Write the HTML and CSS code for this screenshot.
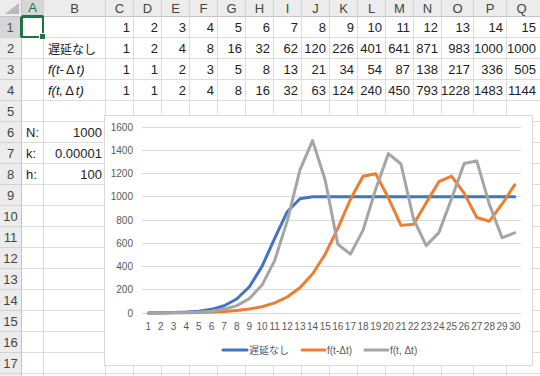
FILE: index.html
```html
<!DOCTYPE html>
<html lang="ja">
<head>
<meta charset="utf-8">
<title>Sheet</title>
<link rel="stylesheet" href="styles.css">
</head>
<body>
<div class="page">
  <div class="sheet">
    <div class="row hdr">
      <div class="corner"></div><div class="ch sel">A</div><div class="ch">B</div><div class="ch">C</div><div class="ch">D</div><div class="ch">E</div><div class="ch">F</div><div class="ch">G</div><div class="ch">H</div><div class="ch">I</div><div class="ch">J</div><div class="ch">K</div><div class="ch">L</div><div class="ch">M</div><div class="ch">N</div><div class="ch">O</div><div class="ch">P</div><div class="ch">Q</div>
    </div>
    <div class="row">
      <div class="rh sel">1</div><div class="cell a1"></div><div class="cell"></div><div class="cell num">1</div><div class="cell num">2</div><div class="cell num">3</div><div class="cell num">4</div><div class="cell num">5</div><div class="cell num">6</div><div class="cell num">7</div><div class="cell num">8</div><div class="cell num">9</div><div class="cell num">10</div><div class="cell num">11</div><div class="cell num">12</div><div class="cell num">13</div><div class="cell num">14</div><div class="cell num">15</div>
    </div>
    <div class="row">
      <div class="rh">2</div><div class="cell"></div><div class="cell txt jp">遅延なし</div><div class="cell num">1</div><div class="cell num">2</div><div class="cell num">4</div><div class="cell num">8</div><div class="cell num">16</div><div class="cell num">32</div><div class="cell num">62</div><div class="cell num">120</div><div class="cell num">226</div><div class="cell num">401</div><div class="cell num">641</div><div class="cell num">871</div><div class="cell num">983</div><div class="cell num">1000</div><div class="cell num">1000</div>
    </div>
    <div class="row">
      <div class="rh">3</div><div class="cell"></div><div class="cell txt it">f(t-<span class="delta">Δ</span>t)</div><div class="cell num">1</div><div class="cell num">1</div><div class="cell num">2</div><div class="cell num">3</div><div class="cell num">5</div><div class="cell num">8</div><div class="cell num">13</div><div class="cell num">21</div><div class="cell num">34</div><div class="cell num">54</div><div class="cell num">87</div><div class="cell num">138</div><div class="cell num">217</div><div class="cell num">336</div><div class="cell num">505</div>
    </div>
    <div class="row">
      <div class="rh">4</div><div class="cell"></div><div class="cell txt it">f(t, <span class="delta">Δ</span>t)</div><div class="cell num">1</div><div class="cell num">1</div><div class="cell num">2</div><div class="cell num">4</div><div class="cell num">8</div><div class="cell num">16</div><div class="cell num">32</div><div class="cell num">63</div><div class="cell num">124</div><div class="cell num">240</div><div class="cell num">450</div><div class="cell num">793</div><div class="cell num">1228</div><div class="cell num">1483</div><div class="cell num">1144</div>
    </div>
    <div class="row">
      <div class="rh">5</div><div class="cell"></div><div class="cell"></div><div class="cell"></div><div class="cell"></div><div class="cell"></div><div class="cell"></div><div class="cell"></div><div class="cell"></div><div class="cell"></div><div class="cell"></div><div class="cell"></div><div class="cell"></div><div class="cell"></div><div class="cell"></div><div class="cell"></div><div class="cell"></div><div class="cell"></div>
    </div>
    <div class="row">
      <div class="rh">6</div><div class="cell txt">N:</div><div class="cell num">1000</div><div class="cell"></div><div class="cell"></div><div class="cell"></div><div class="cell"></div><div class="cell"></div><div class="cell"></div><div class="cell"></div><div class="cell"></div><div class="cell"></div><div class="cell"></div><div class="cell"></div><div class="cell"></div><div class="cell"></div><div class="cell"></div><div class="cell"></div>
    </div>
    <div class="row">
      <div class="rh">7</div><div class="cell txt">k:</div><div class="cell num">0.00001</div><div class="cell"></div><div class="cell"></div><div class="cell"></div><div class="cell"></div><div class="cell"></div><div class="cell"></div><div class="cell"></div><div class="cell"></div><div class="cell"></div><div class="cell"></div><div class="cell"></div><div class="cell"></div><div class="cell"></div><div class="cell"></div><div class="cell"></div>
    </div>
    <div class="row">
      <div class="rh">8</div><div class="cell txt">h:</div><div class="cell num">100</div><div class="cell"></div><div class="cell"></div><div class="cell"></div><div class="cell"></div><div class="cell"></div><div class="cell"></div><div class="cell"></div><div class="cell"></div><div class="cell"></div><div class="cell"></div><div class="cell"></div><div class="cell"></div><div class="cell"></div><div class="cell"></div><div class="cell"></div>
    </div>
    <div class="row">
      <div class="rh">9</div><div class="cell"></div><div class="cell"></div><div class="cell"></div><div class="cell"></div><div class="cell"></div><div class="cell"></div><div class="cell"></div><div class="cell"></div><div class="cell"></div><div class="cell"></div><div class="cell"></div><div class="cell"></div><div class="cell"></div><div class="cell"></div><div class="cell"></div><div class="cell"></div><div class="cell"></div>
    </div>
    <div class="row">
      <div class="rh">10</div><div class="cell"></div><div class="cell"></div><div class="cell"></div><div class="cell"></div><div class="cell"></div><div class="cell"></div><div class="cell"></div><div class="cell"></div><div class="cell"></div><div class="cell"></div><div class="cell"></div><div class="cell"></div><div class="cell"></div><div class="cell"></div><div class="cell"></div><div class="cell"></div><div class="cell"></div>
    </div>
    <div class="row">
      <div class="rh">11</div><div class="cell"></div><div class="cell"></div><div class="cell"></div><div class="cell"></div><div class="cell"></div><div class="cell"></div><div class="cell"></div><div class="cell"></div><div class="cell"></div><div class="cell"></div><div class="cell"></div><div class="cell"></div><div class="cell"></div><div class="cell"></div><div class="cell"></div><div class="cell"></div><div class="cell"></div>
    </div>
    <div class="row">
      <div class="rh">12</div><div class="cell"></div><div class="cell"></div><div class="cell"></div><div class="cell"></div><div class="cell"></div><div class="cell"></div><div class="cell"></div><div class="cell"></div><div class="cell"></div><div class="cell"></div><div class="cell"></div><div class="cell"></div><div class="cell"></div><div class="cell"></div><div class="cell"></div><div class="cell"></div><div class="cell"></div>
    </div>
    <div class="row">
      <div class="rh">13</div><div class="cell"></div><div class="cell"></div><div class="cell"></div><div class="cell"></div><div class="cell"></div><div class="cell"></div><div class="cell"></div><div class="cell"></div><div class="cell"></div><div class="cell"></div><div class="cell"></div><div class="cell"></div><div class="cell"></div><div class="cell"></div><div class="cell"></div><div class="cell"></div><div class="cell"></div>
    </div>
    <div class="row">
      <div class="rh">14</div><div class="cell"></div><div class="cell"></div><div class="cell"></div><div class="cell"></div><div class="cell"></div><div class="cell"></div><div class="cell"></div><div class="cell"></div><div class="cell"></div><div class="cell"></div><div class="cell"></div><div class="cell"></div><div class="cell"></div><div class="cell"></div><div class="cell"></div><div class="cell"></div><div class="cell"></div>
    </div>
    <div class="row">
      <div class="rh">15</div><div class="cell"></div><div class="cell"></div><div class="cell"></div><div class="cell"></div><div class="cell"></div><div class="cell"></div><div class="cell"></div><div class="cell"></div><div class="cell"></div><div class="cell"></div><div class="cell"></div><div class="cell"></div><div class="cell"></div><div class="cell"></div><div class="cell"></div><div class="cell"></div><div class="cell"></div>
    </div>
    <div class="row">
      <div class="rh">16</div><div class="cell"></div><div class="cell"></div><div class="cell"></div><div class="cell"></div><div class="cell"></div><div class="cell"></div><div class="cell"></div><div class="cell"></div><div class="cell"></div><div class="cell"></div><div class="cell"></div><div class="cell"></div><div class="cell"></div><div class="cell"></div><div class="cell"></div><div class="cell"></div><div class="cell"></div>
    </div>
    <div class="row">
      <div class="rh">17</div><div class="cell"></div><div class="cell"></div><div class="cell"></div><div class="cell"></div><div class="cell"></div><div class="cell"></div><div class="cell"></div><div class="cell"></div><div class="cell"></div><div class="cell"></div><div class="cell"></div><div class="cell"></div><div class="cell"></div><div class="cell"></div><div class="cell"></div><div class="cell"></div><div class="cell"></div>
    </div>
    <div class="row">
      <div class="rh"></div><div class="cell"></div><div class="cell"></div><div class="cell"></div><div class="cell"></div><div class="cell"></div><div class="cell"></div><div class="cell"></div><div class="cell"></div><div class="cell"></div><div class="cell"></div><div class="cell"></div><div class="cell"></div><div class="cell"></div><div class="cell"></div><div class="cell"></div><div class="cell"></div><div class="cell"></div>
    </div>
  </div>

  <div class="chart">
    <svg class="chart-svg" width="429" height="251" viewBox="0 0 429 251">
      <g class="grid">
        <line x1="38" x2="417" y1="12.5" y2="12.5"/>
        <line x1="38" x2="417" y1="35.5" y2="35.5"/>
        <line x1="38" x2="417" y1="58.5" y2="58.5"/>
        <line x1="38" x2="417" y1="81.5" y2="81.5"/>
        <line x1="38" x2="417" y1="105.5" y2="105.5"/>
        <line x1="38" x2="417" y1="128.5" y2="128.5"/>
        <line x1="38" x2="417" y1="151.5" y2="151.5"/>
        <line x1="38" x2="417" y1="174.5" y2="174.5"/>
        <line x1="38" x2="417" y1="198.5" y2="198.5"/>
      </g>
      <g class="ylab">
        <text x="29" y="15.5">1600</text>
        <text x="29" y="38.5">1400</text>
        <text x="29" y="61.5">1200</text>
        <text x="29" y="84.5">1000</text>
        <text x="29" y="108.5">800</text>
        <text x="29" y="131.5">600</text>
        <text x="29" y="154.5">400</text>
        <text x="29" y="177.5">200</text>
        <text x="29" y="201.5">0</text>
      </g>
      <g class="xlab">
        <text x="44.3" y="214.5">1</text>
        <text x="56.9" y="214.5">2</text>
        <text x="69.6" y="214.5">3</text>
        <text x="82.2" y="214.5">4</text>
        <text x="94.8" y="214.5">5</text>
        <text x="107.5" y="214.5">6</text>
        <text x="120.1" y="214.5">7</text>
        <text x="132.7" y="214.5">8</text>
        <text x="145.4" y="214.5">9</text>
        <text x="158" y="214.5">10</text>
        <text x="170.6" y="214.5">11</text>
        <text x="183.3" y="214.5">12</text>
        <text x="195.9" y="214.5">13</text>
        <text x="208.5" y="214.5">14</text>
        <text x="221.2" y="214.5">15</text>
        <text x="233.8" y="214.5">16</text>
        <text x="246.4" y="214.5">17</text>
        <text x="259.1" y="214.5">18</text>
        <text x="271.7" y="214.5">19</text>
        <text x="284.3" y="214.5">20</text>
        <text x="297" y="214.5">21</text>
        <text x="309.6" y="214.5">22</text>
        <text x="322.2" y="214.5">23</text>
        <text x="334.9" y="214.5">24</text>
        <text x="347.5" y="214.5">25</text>
        <text x="360.1" y="214.5">26</text>
        <text x="372.8" y="214.5">27</text>
        <text x="385.4" y="214.5">28</text>
        <text x="398" y="214.5">29</text>
        <text x="410.7" y="214.5">30</text>
      </g>
      <g class="series">
        <polyline id="s-none" class="s-blue" points=""/>
        <polyline id="s-delay" class="s-orange" points=""/>
        <polyline id="s-mixed" class="s-gray" points=""/>
      </g>
      <g class="legend">
        <line class="s-blue" x1="119" x2="143" y1="235" y2="235"/>
        <text class="jp" x="145" y="238.5">遅延なし</text>
        <line class="s-orange" x1="198" x2="221" y1="235" y2="235"/>
        <text x="223" y="238.5">f(t-Δt)</text>
        <line class="s-gray" x1="261" x2="284" y1="235" y2="235"/>
        <text x="286" y="238.5">f(t, Δt)</text>
      </g>
    </svg>
  </div>
</div>
<script src="script.js"></script>
</body>
</html>
```

FILE: styles.css
```css
* { box-sizing: border-box; }
html, body { margin: 0; padding: 0; background: #fff; }
body {
  font-family: "Liberation Sans", "Noto Sans CJK JP", sans-serif;
  color: #222;
}
.page {
  position: relative;
  width: 540px;
  height: 376px;
  overflow: hidden;
}
.sheet {
  display: flex;
  flex-direction: column;
}
.row {
  display: grid;
  grid-template-columns: 22px 22px 62px repeat(12, 28px) 32px 33px 36px;
  height: 21px;
  flex: none;
}
.row.hdr { height: 17px; }

.cell {
  border-right: 1px solid #dcdcdc;
  border-bottom: 1px solid #dcdcdc;
  font-size: 13px;
  white-space: nowrap;
  display: flex;
  align-items: center;
  min-width: 0;
}
.num { justify-content: flex-end; padding-right: 3px; }
.row > .num:last-child { padding-right: 6px; }
.txt { padding-left: 4px; }
.jp { font-family: "Noto Sans CJK JP", sans-serif; font-size: 12px; }
.it { font-style: italic; }
.delta { margin: 0 2px; font-style: normal; }

.corner, .ch, .rh {
  background: #ececec;
  color: #444;
  font-size: 13px;
  display: flex;
  align-items: center;
  justify-content: center;
}
.corner {
  position: relative;
  border-right: 1px solid #c4c4c4;
  border-bottom: 1px solid #c4c4c4;
}
.corner::after {
  content: "";
  position: absolute;
  right: 2px;
  bottom: 2px;
  width: 14px;
  height: 11px;
  background: #b9b9b9;
  clip-path: polygon(100% 0, 100% 100%, 0 100%);
}
.ch {
  border-right: 1px solid #d2d2d2;
  border-bottom: 1px solid #c4c4c4;
}
.row.hdr > .ch:last-child { padding-right: 6px; }
.rh {
  border-right: 1px solid #c4c4c4;
  border-bottom: 1px solid #d2d2d2;
}
.ch.sel {
  background: #d6d6d6;
  color: #217346;
  border-bottom: 2px solid #217346;
}
.rh.sel {
  background: #d6d6d6;
  color: #555;
  border-right: 2px solid #217346;
}
.a1 { position: relative; }
.a1::before {
  content: "";
  position: absolute;
  left: -1px; top: -1px; right: -1px; bottom: -1px;
  border: 2px solid #217346;
}
.a1::after {
  content: "";
  position: absolute;
  right: -3px;
  bottom: -3px;
  width: 5px;
  height: 5px;
  background: #217346;
  border: 1px solid #fff;
}

.chart {
  position: absolute;
  left: 104px;
  top: 115px;
  width: 429px;
  height: 251px;
  background: #fff;
  border: 1px solid #d9d9d9;
}
.chart-svg {
  position: absolute;
  left: -1px;
  top: -1px;
  display: block;
}
.grid line { stroke: #d9d9d9; stroke-width: 1; }
.ylab text {
  font-family: "Liberation Sans", sans-serif;
  font-size: 10px;
  fill: #595959;
  text-anchor: end;
}
.xlab text {
  font-family: "Liberation Sans", sans-serif;
  font-size: 10px;
  fill: #595959;
  text-anchor: middle;
}
.legend text {
  font-family: "Liberation Sans", "Noto Sans CJK JP", sans-serif;
  font-size: 10px;
  fill: #595959;
}
.legend text.jp { font-family: "Noto Sans CJK JP", sans-serif; font-size: 10px; }
.series polyline, .legend line {
  fill: none;
  stroke-width: 3;
  stroke-linejoin: round;
  stroke-linecap: round;
}
.s-blue { stroke: #4472c4; }
.s-orange { stroke: #ed7d31; }
.s-gray { stroke: #a5a5a5; }
```

FILE: script.js
```js
(function () {
  var N = 1000, k = 0.00001, h = 100, T = 30, r = k * h;
  var a = [1], d = [1, 1], g = [1, 1];
  var t;
  for (t = 1; t < T; t++) a[t] = a[t - 1] + r * a[t - 1] * (N - a[t - 1]);
  for (t = 2; t < T; t++) {
    d[t] = d[t - 1] + r * d[t - 2] * (N - d[t - 2]);
    g[t] = g[t - 1] + r * g[t - 1] * (N - g[t - 2]);
  }
  function pts(s) {
    return s.map(function (v, i) {
      var x = 31.68 + 12.633 * (i + 1);
      var y = 198 - v * 0.11625;
      return x.toFixed(2) + "," + y.toFixed(2);
    }).join(" ");
  }
  document.getElementById("s-none").setAttribute("points", pts(a));
  document.getElementById("s-delay").setAttribute("points", pts(d));
  document.getElementById("s-mixed").setAttribute("points", pts(g));
})();
```
